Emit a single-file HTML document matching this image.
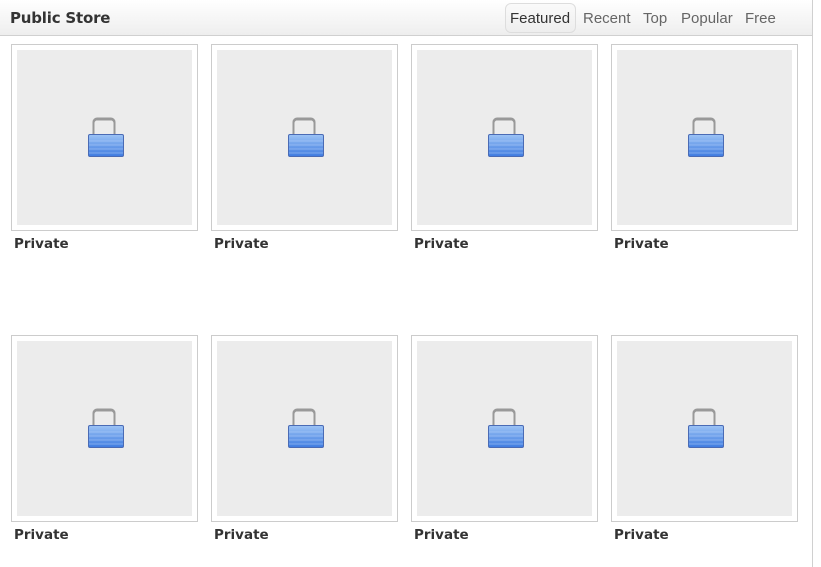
<!DOCTYPE html><html><head><style>
body{margin:0;width:821px;height:567px;background:#fff;font-family:"Liberation Sans",sans-serif;position:relative;overflow:hidden}
.hdr{position:absolute;left:0;top:0;width:812px;height:35px;border-bottom:1px solid #d0d0d0;background:linear-gradient(#fff,#eee)}
.vl{position:absolute;left:812px;top:0;width:1px;height:567px;background:#d0d0d0}
.t{position:absolute;left:10px;top:9px;font-weight:bold;font-size:15px;color:#333;font-family:"DejaVu Sans",sans-serif;letter-spacing:-0.2px}
.tab{position:absolute;top:10px;font-size:15px;color:#666}
.pill{position:absolute;left:505px;top:3px;width:69px;height:28px;border:1px solid #ddd;border-radius:6px;background:linear-gradient(#fafafa,#eee)}
.c{position:absolute;width:185px;height:185px;border:1px solid #ccc;background:#fff}
.c .g{position:absolute;left:5px;top:5px;width:175px;height:175px;background:#ececec}
.c svg{position:absolute;left:75px;top:72px}
.l{position:absolute;font-weight:bold;font-size:13.5px;color:#333;font-family:"DejaVu Sans",sans-serif}
</style></head><body>
<div class="hdr"></div><div class="vl"></div>
<div class="t">Public Store</div>
<div class="pill"></div>
<div class="tab" style="left:510px;color:#333">Featured</div>
<div class="tab" style="left:583px">Recent</div>
<div class="tab" style="left:643px">Top</div>
<div class="tab" style="left:681px">Popular</div>
<div class="tab" style="left:745px">Free</div>
<svg width="0" height="0" style="position:absolute"><defs>
<linearGradient id="b" x1="0" y1="0" x2="0" y2="1"><stop offset="0" stop-color="#9cc3f5"/><stop offset="1" stop-color="#3f7be0"/></linearGradient></defs></svg>
<div id="cards"></div>
<script>
var h='';var L='<svg width="38" height="42"><path d="M7 19V5a3 3 0 0 1 3-3h14a3 3 0 0 1 3 3v14" fill="none" stroke="#999" stroke-width="3"/><path d="M8 19V6a2 2 0 0 1 2-2h14a2 2 0 0 1 2 2v13" fill="none" stroke="#eee" stroke-width="1"/><rect x="1.5" y="17.5" width="35" height="22" rx="1.5" fill="url(#b)" stroke="#4a6bb5"/><path d="M2 24h34M2 28h34M2 32h34M2 36h34" stroke="#bcd6fa" stroke-width=".7" opacity=".6"/></svg>';
[44,335].forEach(function(y){[11,211,411,611].forEach(function(x){h+='<div class="c" style="left:'+x+'px;top:'+y+'px"><div class="g"></div>'+L+'</div><div class="l" style="left:'+(x+3)+'px;top:'+(y+192)+'px">Private</div>';});});
document.getElementById('cards').innerHTML=h;
</script>
</body></html>
